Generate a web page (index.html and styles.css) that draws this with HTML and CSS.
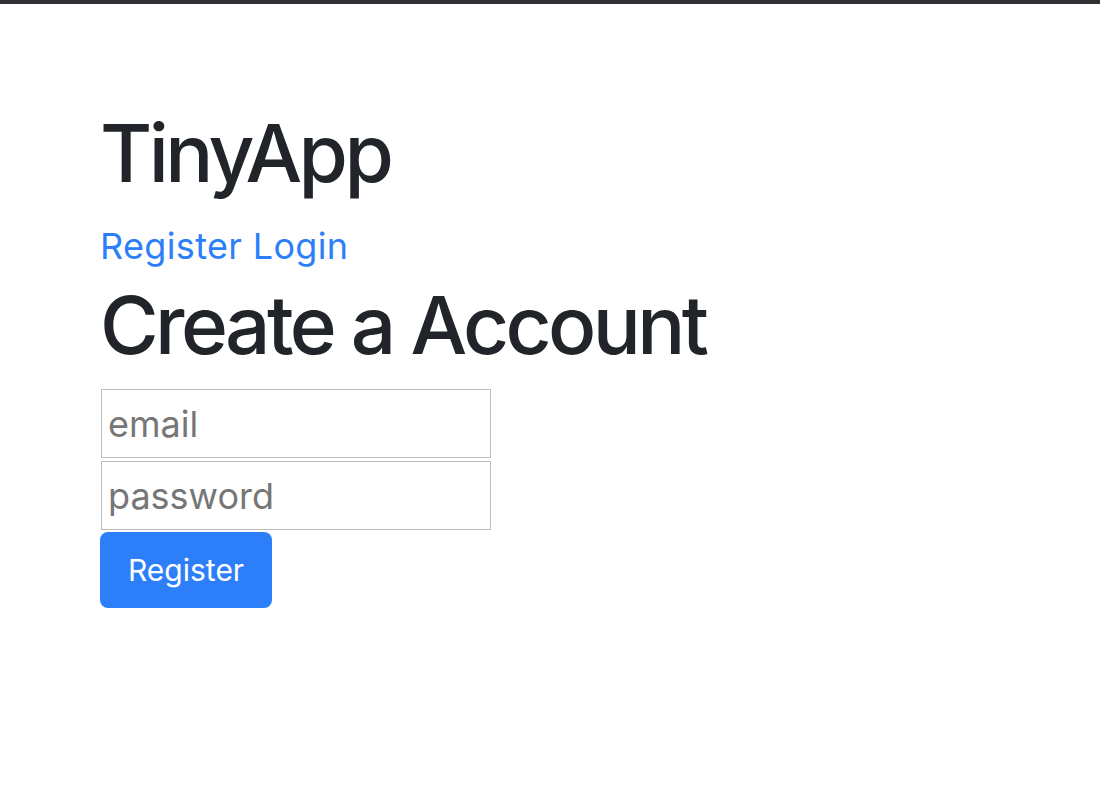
FILE: index.html
```html
<!DOCTYPE html>
<html lang="en">
<head>
<meta charset="utf-8">
<title>TinyApp</title>
<link rel="stylesheet" href="styles.css">
</head>
<body>
<div class="topbar"></div>
<main class="page">
  <h1 class="title">TinyApp</h1>
  <nav class="nav"><a href="#" class="nav-link">Register</a> <a href="#" class="nav-link">Login</a></nav>
  <h1 class="heading">Create a Account</h1>
  <form class="form">
    <input class="field" type="email" placeholder="email">
    <input class="field" type="password" placeholder="password">
    <button class="btn" type="button">Register</button>
  </form>
</main>
</body>
</html>
```
FILE: styles.css
```css
html, body {
  margin: 0;
  padding: 0;
  background: #ffffff;
}
body {
  font-family: Inter, "Noto Sans", "Liberation Sans", sans-serif;
  color: #212529;
}
.topbar {
  height: 4px;
  background: #2e3033;
}
.page {
  padding: 101px 0 0 100px;
}
.title, .heading {
  font-size: 80px;
  font-weight: 500;
  line-height: 96px;
  margin: 0;
  letter-spacing: -3.6px;
}
.title {
  margin-bottom: 18px;
}
.nav {
  font-size: 36px;
  line-height: 54px;
  margin-bottom: 4px;
  letter-spacing: 0.35px;
}
.nav-link {
  color: #2c7ff8;
  text-decoration: none;
}
.heading {
  margin-bottom: 16px;
}
.form {
  display: flex;
  flex-direction: column;
  align-items: flex-start;
}
.field {
  box-sizing: border-box;
  width: 390px;
  height: 69px;
  margin: 0 0 3px 1px;
  padding: 0 6px;
  border: 1px solid #bdbdbd;
  border-radius: 0;
  font-family: inherit;
  font-size: 36px;
  color: #212529;
  outline: none;
}
.field + .field + .btn {
  margin-top: -1px;
}
.field::placeholder {
  color: #767676;
}
.btn {
  box-sizing: border-box;
  height: 76px;
  padding: 0 28px;
  border: none;
  border-radius: 8px;
  background: #2c7ff8;
  color: #ffffff;
  font-family: inherit;
  font-size: 30px;
  line-height: 45px;
  cursor: pointer;
}
```
